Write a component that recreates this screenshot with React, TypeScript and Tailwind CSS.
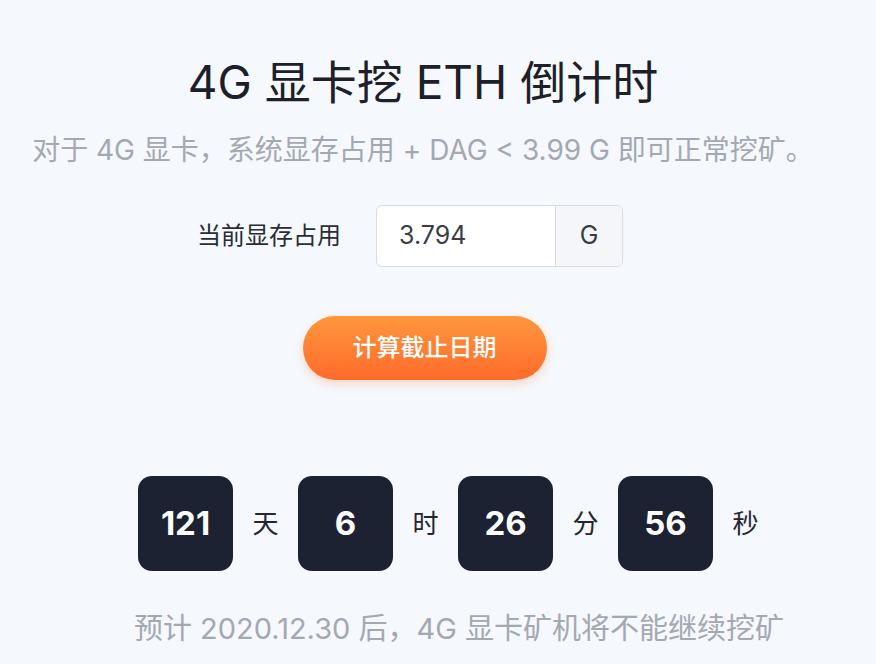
import React from "react";

const font = { fontFamily: '"Inter", "Noto Sans CJK SC", sans-serif' };

function Unit({ value, label }: { value: string; label: string }) {
  return (
    <div className="flex items-center">
      <div className="flex h-[95px] w-[95px] items-center justify-center rounded-[14px] bg-[#1c2231] text-[33px] font-bold text-white">
        {value}
      </div>
      <div className="w-[65px] text-center text-[26px] text-[#222630]">{label}</div>
    </div>
  );
}

export default function App() {
  return (
    <div className="flex h-[664px] w-[876px] flex-col items-center bg-[#f5f8fc]" style={font}>
      <h1 className="mt-[54px] mr-[30px] text-[46px] leading-[56px] font-normal text-[#1d2029]">
        4G 显卡挖 ETH 倒计时
      </h1>
      <p className="mt-[22px] mr-[30px] text-[28px] leading-[36px] text-[#a3a8b2]">
        对于 4G 显卡，系统显存占用 + DAG &lt; 3.99 G 即可正常挖矿。
      </p>
      <div className="mt-[37px] mr-[56px] flex items-center">
        <span className="mr-[35px] text-[24px] text-[#2a2d34]">当前显存占用</span>
        <div className="flex h-[62px] w-[247px] overflow-hidden rounded-[6px] border border-[#d8dce2] bg-white">
          <div className="flex flex-1 items-center pl-[22px] text-[25px] text-[#3a3d44]">3.794</div>
          <div className="flex w-[67px] items-center justify-center border-l border-[#d8dce2] bg-[#f4f6f9] text-[25px] text-[#3a3d44]">
            G
          </div>
        </div>
      </div>
      <button className="mt-[49px] mr-[27px] flex h-[64px] w-[244px] items-center justify-center rounded-full bg-gradient-to-b from-[#ff963d] to-[#ff6a2b] text-[24px] font-medium text-white shadow-[0_4px_10px_rgba(255,120,50,0.25)]">
        计算截止日期
      </button>
      <div className="mt-[96px] ml-[40px] flex items-center">
        <Unit value="121" label="天" />
        <Unit value="6" label="时" />
        <Unit value="26" label="分" />
        <Unit value="56" label="秒" />
      </div>
      <p className="mt-[40px] ml-[42px] text-[29px] leading-[36px] text-[#a3a8b2]">
        预计 2020.12.30 后，4G 显卡矿机将不能继续挖矿
      </p>
    </div>
  );
}
